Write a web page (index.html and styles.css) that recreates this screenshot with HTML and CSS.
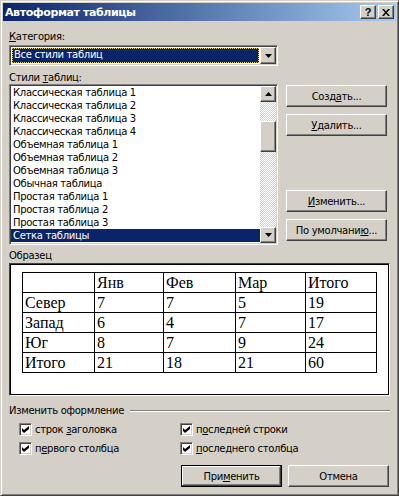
FILE: index.html
```html
<!DOCTYPE html>
<html lang="ru">
<head>
<meta charset="UTF-8">
<title>Автоформат таблицы</title>
<link rel="stylesheet" href="styles.css">
</head>
<body>

<div class="window">
    <div class="titlebar">
        <span class="title">Автоформат таблицы</span>
        <div class="cap-btns">
            <span class="cap-btn help">?</span>
            <span class="cap-btn">
                <svg width="8" height="7" viewBox="0 0 8 7"><path d="M0 0h2l2 2.4L6 0h2L5 3.5 8 7H6L4 4.6 2 7H0l3-3.5z" fill="#000"/></svg>
            </span>
        </div>
    </div>

    <div class="content">
        <div class="label"><u>К</u>атегория:</div>
        <div class="combo">
            <div class="combo-value"><span>Все стили таблиц</span></div>
            <div class="raised drop-btn">
                <svg width="7" height="4" viewBox="0 0 7 4"><path d="M0 0h7L3.5 4z" fill="#000"/></svg>
            </div>
        </div>

        <div class="label label-styles">Стили <u>т</u>аблиц:</div>
        <div class="styles-row">
            <div class="listbox">
                <ul class="items">
                    <li>Классическая таблица 1</li>
                    <li>Классическая таблица 2</li>
                    <li>Классическая таблица 3</li>
                    <li>Классическая таблица 4</li>
                    <li>Объемная таблица 1</li>
                    <li>Объемная таблица 2</li>
                    <li>Объемная таблица 3</li>
                    <li>Обычная таблица</li>
                    <li>Простая таблица 1</li>
                    <li>Простая таблица 2</li>
                    <li>Простая таблица 3</li>
                    <li class="sel">Сетка таблицы</li>
                </ul>
                <div class="scrollbar">
                    <div class="raised sb-btn">
                        <svg width="7" height="4" viewBox="0 0 7 4"><path d="M0 4h7L3.5 0z" fill="#000"/></svg>
                    </div>
                    <div class="sb-track"><div class="raised sb-thumb"></div></div>
                    <div class="raised sb-btn">
                        <svg width="7" height="4" viewBox="0 0 7 4"><path d="M0 0h7L3.5 4z" fill="#000"/></svg>
                    </div>
                </div>
            </div>
            <div class="side-btns">
                <div class="btn"><span>Созд<u>а</u>ть...</span></div>
                <div class="btn"><span><u>У</u>далить...</span></div>
                <div class="btn btn-gap"><span><u>И</u>зменить...</span></div>
                <div class="btn"><span>По умолчани<u>ю</u>...</span></div>
            </div>
        </div>

        <div class="label label-sample">Образец</div>
        <div class="preview">
            <table class="sample">
                <colgroup>
                    <col style="width:72px"><col style="width:69px"><col style="width:72px"><col style="width:70px"><col style="width:71px">
                </colgroup>
                <tr><td></td><td>Янв</td><td>Фев</td><td>Мар</td><td>Итого</td></tr>
                <tr><td>Север</td><td>7</td><td>7</td><td>5</td><td>19</td></tr>
                <tr><td>Запад</td><td>6</td><td>4</td><td>7</td><td>17</td></tr>
                <tr><td>Юг</td><td>8</td><td>7</td><td>9</td><td>24</td></tr>
                <tr><td>Итого</td><td>21</td><td>18</td><td>21</td><td>60</td></tr>
            </table>
        </div>

        <div class="group-title">
            <span>Изменить оформление</span>
            <span class="etched"></span>
        </div>
        <div class="checks">
            <label class="check"><span class="box"><svg width="7" height="7" viewBox="0 0 7 7"><path d="M0 2l2 2 5-4v3L2 7 0 5z" fill="#000"/></svg></span><span>строк <u>з</u>аголовка</span></label>
            <label class="check"><span class="box"><svg width="7" height="7" viewBox="0 0 7 7"><path d="M0 2l2 2 5-4v3L2 7 0 5z" fill="#000"/></svg></span><span>п<u>о</u>следней строки</span></label>
            <label class="check"><span class="box"><svg width="7" height="7" viewBox="0 0 7 7"><path d="M0 2l2 2 5-4v3L2 7 0 5z" fill="#000"/></svg></span><span>п<u>е</u>рвого столбца</span></label>
            <label class="check"><span class="box"><svg width="7" height="7" viewBox="0 0 7 7"><path d="M0 2l2 2 5-4v3L2 7 0 5z" fill="#000"/></svg></span><span><u>п</u>оследнего столбца</span></label>
        </div>

        <div class="footer">
            <div class="btn btn-default"><span>При<u>м</u>енить</span></div>
            <div class="btn"><span>Отмена</span></div>
        </div>
    </div>
</div>

</body>
</html>
```

FILE: styles.css
```css
body {
    margin: 0;
    background-color: #d4d0c8;
    font-family: "DejaVu Sans", Tahoma, sans-serif;
    font-size: 10px;
    letter-spacing: -0.3px;
    color: #000;
}
u {
    text-decoration: underline;
    text-underline-offset: 1px;
}
.window {
    width: 399px;
    height: 496px;
    box-sizing: border-box;
    border: 1px solid;
    border-color: #d4d0c8 #404040 #404040 #d4d0c8;
    box-shadow: inset 1px 1px #fff, inset -1px -1px #808080;
    padding: 2px;
}
.titlebar {
    height: 18px;
    display: flex;
    align-items: center;
    justify-content: space-between;
    padding: 0 2px;
    background: linear-gradient(to right, #0a246a, #a6caf0);
}
.title {
    color: #fff;
    font-weight: bold;
    font-size: 11px;
    letter-spacing: -0.4px;
}
.cap-btns {
    display: flex;
    gap: 2px;
}
.raised {
    box-sizing: border-box;
    background-color: #d4d0c8;
    border: 1px solid;
    border-color: #fff #404040 #404040 #fff;
    box-shadow: inset -1px -1px #808080;
}
.cap-btn {
    width: 16px;
    height: 14px;
    box-sizing: border-box;
    display: flex;
    align-items: center;
    justify-content: center;
    background-color: #d4d0c8;
    border: 1px solid;
    border-color: #fff #404040 #404040 #fff;
    box-shadow: inset -1px -1px #808080;
}
.help {
    font-family: "Liberation Sans", Arial, sans-serif;
    font-weight: bold;
    font-size: 11px;
    letter-spacing: 0;
    line-height: 1;
}
.content {
    padding: 9px 6px 0 6px;
}
.label {
    line-height: 13px;
    height: 13px;
}
.combo {
    width: 269px;
    height: 21px;
    margin-top: 2px;
    box-sizing: border-box;
    display: flex;
    background-color: #fff;
    border: 1px solid;
    border-color: #808080 #fff #fff #808080;
    box-shadow: inset 1px 1px #404040, inset -1px -1px #d4d0c8;
    padding: 1px;
}
.combo-value {
    flex: 1;
    padding: 1px;
}
.combo-value span {
    display: block;
    height: 15px;
    line-height: 14px;
    padding-left: 2px;
    background-color: #0a246a;
    color: #fff;
    outline: 1px dotted #d8c878;
    outline-offset: -1px;
}
.drop-btn {
    width: 16px;
    height: 17px;
    display: flex;
    align-items: center;
    justify-content: center;
}
.label-styles {
    margin-top: 5px;
}
.styles-row {
    display: flex;
}
.listbox {
    width: 269px;
    height: 161px;
    box-sizing: border-box;
    display: flex;
    background-color: #fff;
    border: 1px solid;
    border-color: #808080 #fff #fff #808080;
    box-shadow: inset 1px 1px #404040, inset -1px -1px #d4d0c8;
    padding: 1px;
}
.items {
    flex: 1;
    list-style: none;
    margin: 0;
    padding: 0;
}
.items li {
    height: 13px;
    line-height: 13px;
    padding-left: 2px;
    white-space: nowrap;
}
.items li.sel {
    background-color: #0a246a;
    color: #fff;
}
.scrollbar {
    width: 16px;
    display: flex;
    flex-direction: column;
}
.sb-btn {
    height: 16px;
    display: flex;
    align-items: center;
    justify-content: center;
}
.sb-track {
    flex: 1;
    background: repeating-conic-gradient(#d4d0c8 0 25%, #fff 0 50%) 0 0 / 2px 2px;
}
.sb-thumb {
    height: 31px;
    margin-top: 19px;
}
.side-btns {
    margin-left: 8px;
    padding-top: 1px;
    display: flex;
    flex-direction: column;
    gap: 7px;
}
.btn {
    width: 101px;
    height: 22px;
    box-sizing: border-box;
    display: flex;
    align-items: center;
    justify-content: center;
    border: 1px solid;
    border-color: #fff #404040 #404040 #fff;
    box-shadow: inset -1px -1px #808080;
}
.btn-gap {
    margin-top: 47px;
}
.label-sample {
    margin-top: 4px;
}
.preview {
    width: 381px;
    height: 133px;
    box-sizing: border-box;
    margin-top: 1px;
    background-color: #fff;
    border: 1px solid;
    border-color: #404040 #fff #fff #404040;
    box-shadow: inset 1px 1px #000, inset -1px -1px #000;
    padding: 8px 0 0 12px;
}
.sample {
    border-collapse: collapse;
    table-layout: fixed;
    width: 355px;
    font-family: "Liberation Serif", "Times New Roman", serif;
    font-size: 16px;
    letter-spacing: 0;
}
.sample td {
    border: 1px solid #000;
    height: 19px;
    padding: 0 0 0 2px;
    line-height: 19px;
    vertical-align: bottom;
}
.group-title {
    display: flex;
    align-items: center;
    gap: 6px;
    margin-top: 8px;
    line-height: 13px;
}
.etched {
    flex: 1;
    border-top: 1px solid #808080;
    border-bottom: 1px solid #fff;
}
.checks {
    display: grid;
    grid-template-columns: 161px 1fr;
    row-gap: 6px;
    margin-top: 6px;
    padding-left: 10px;
}
.check {
    display: flex;
    align-items: center;
    gap: 3px;
    height: 13px;
}
.box {
    width: 13px;
    height: 13px;
    box-sizing: border-box;
    display: flex;
    align-items: center;
    justify-content: center;
    background-color: #fff;
    border: 1px solid;
    border-color: #808080 #fff #fff #808080;
    box-shadow: inset 1px 1px #404040, inset -1px -1px #d4d0c8;
}
.footer {
    display: flex;
    justify-content: flex-end;
    gap: 6px;
    margin-top: 10px;
    padding-right: 1px;
}
.btn-default {
    border: 1px solid #000;
    box-shadow: inset -1px -1px #404040, inset 1px 1px #fff, inset -2px -2px #808080;
}
```
